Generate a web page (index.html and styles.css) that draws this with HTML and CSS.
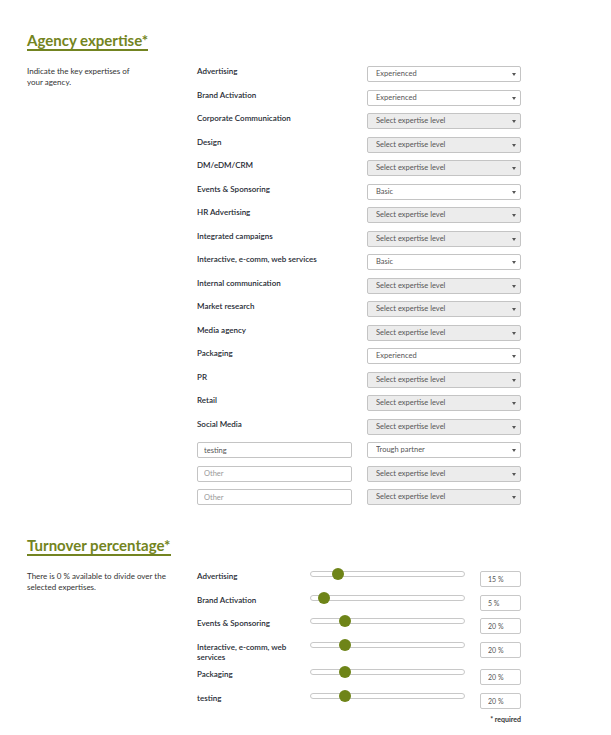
FILE: index.html
```html
<!DOCTYPE html>
<html lang="en">
<head>
<meta charset="utf-8">
<title>Agency expertise</title>
<link rel="stylesheet" href="styles.css">
</head>
<body>
<div class="page">
  <section class="block">
    <h2 class="heading">Agency expertise*</h2>
    <div class="block-body">
      <p class="intro intro-narrow">Indicate the key expertises of your agency.</p>
      <div class="rows">
        <div class="row"><span class="label">Advertising</span><div class="select-wrap"><select class="select"><option>Experienced</option></select></div></div>
        <div class="row"><span class="label">Brand Activation</span><div class="select-wrap"><select class="select"><option>Experienced</option></select></div></div>
        <div class="row"><span class="label">Corporate Communication</span><div class="select-wrap"><select class="select empty"><option>Select expertise level</option></select></div></div>
        <div class="row"><span class="label">Design</span><div class="select-wrap"><select class="select empty"><option>Select expertise level</option></select></div></div>
        <div class="row"><span class="label">DM/eDM/CRM</span><div class="select-wrap"><select class="select empty"><option>Select expertise level</option></select></div></div>
        <div class="row"><span class="label">Events &amp; Sponsoring</span><div class="select-wrap"><select class="select"><option>Basic</option></select></div></div>
        <div class="row"><span class="label">HR Advertising</span><div class="select-wrap"><select class="select empty"><option>Select expertise level</option></select></div></div>
        <div class="row"><span class="label">Integrated campaigns</span><div class="select-wrap"><select class="select empty"><option>Select expertise level</option></select></div></div>
        <div class="row"><span class="label">Interactive, e-comm, web services</span><div class="select-wrap"><select class="select"><option>Basic</option></select></div></div>
        <div class="row"><span class="label">Internal communication</span><div class="select-wrap"><select class="select empty"><option>Select expertise level</option></select></div></div>
        <div class="row"><span class="label">Market research</span><div class="select-wrap"><select class="select empty"><option>Select expertise level</option></select></div></div>
        <div class="row"><span class="label">Media agency</span><div class="select-wrap"><select class="select empty"><option>Select expertise level</option></select></div></div>
        <div class="row"><span class="label">Packaging</span><div class="select-wrap"><select class="select"><option>Experienced</option></select></div></div>
        <div class="row"><span class="label">PR</span><div class="select-wrap"><select class="select empty"><option>Select expertise level</option></select></div></div>
        <div class="row"><span class="label">Retail</span><div class="select-wrap"><select class="select empty"><option>Select expertise level</option></select></div></div>
        <div class="row"><span class="label">Social Media</span><div class="select-wrap"><select class="select empty"><option>Select expertise level</option></select></div></div>
        <div class="row"><input class="text-input" type="text" value="testing"><div class="select-wrap"><select class="select"><option>Trough partner</option></select></div></div>
        <div class="row"><input class="text-input" type="text" placeholder="Other"><div class="select-wrap"><select class="select empty"><option>Select expertise level</option></select></div></div>
        <div class="row"><input class="text-input" type="text" placeholder="Other"><div class="select-wrap"><select class="select empty"><option>Select expertise level</option></select></div></div>
      </div>
    </div>
  </section>

  <section class="block block-turnover">
    <h2 class="heading">Turnover percentage*</h2>
    <div class="block-body">
      <p class="intro intro-wide">There is 0 % available to divide over the selected expertises.</p>
      <div class="sliders">
        <div class="srow"><span class="label">Advertising</span><input class="range" type="range" min="0" max="100" value="15"><input class="pct" type="text" value="15 %"></div>
        <div class="srow"><span class="label">Brand Activation</span><input class="range" type="range" min="0" max="100" value="5"><input class="pct" type="text" value="5 %"></div>
        <div class="srow"><span class="label">Events &amp; Sponsoring</span><input class="range" type="range" min="0" max="100" value="20"><input class="pct" type="text" value="20 %"></div>
        <div class="srow"><span class="label">Interactive, e-comm, web services</span><input class="range" type="range" min="0" max="100" value="20"><input class="pct" type="text" value="20 %"></div>
        <div class="srow"><span class="label">Packaging</span><input class="range" type="range" min="0" max="100" value="20"><input class="pct" type="text" value="20 %"></div>
        <div class="srow"><span class="label">testing</span><input class="range" type="range" min="0" max="100" value="20"><input class="pct" type="text" value="20 %"></div>
        <p class="required">* required</p>
      </div>
    </div>
  </section>
</div>
</body>
</html>
```
FILE: styles.css
```css
* { box-sizing: border-box; }

html, body {
  margin: 0;
  padding: 0;
  background: #ffffff;
}

body {
  font-family: Lato, "Open Sans", "Liberation Sans", sans-serif;
  color: #333333;
  font-size: 8px;
}

.page {
  padding: 31px 0 0 27px;
  width: 611px;
}

.block-turnover {
  margin-top: 31px;
}

.heading {
  display: inline-block;
  margin: 0;
  font-size: 15px;
  line-height: 18px;
  font-weight: 700;
  color: #738421;
  border-bottom: 2px solid #738421;
  padding-bottom: 0;
}

.block-body {
  display: flex;
  margin-top: 15px;
}

.intro {
  margin: 0;
  font-size: 8px;
  line-height: 11px;
  color: #333;
  flex: 0 0 170px;
  padding-right: 20px;
}

.intro-narrow { padding-right: 58px; }
.intro-wide { padding-right: 20px; }

.rows {
  display: flex;
  flex-direction: column;
  gap: 7.5px;
}

.row {
  display: grid;
  grid-template-columns: 155px 154px;
  column-gap: 15px;
  align-items: start;
  height: 16px;
}

.label {
  font-weight: 600;
  font-size: 8px;
  line-height: 10px;
  color: #262a33;
  white-space: nowrap;
}

.select-wrap {
  position: relative;
  width: 154px;
  height: 16px;
}

.select-wrap::after {
  content: "";
  position: absolute;
  right: 5px;
  top: 7px;
  border-left: 2px solid transparent;
  border-right: 2px solid transparent;
  border-top: 3px solid #555;
  pointer-events: none;
}

.select {
  -webkit-appearance: none;
  appearance: none;
  display: block;
  width: 154px;
  height: 16px;
  margin: 0;
  padding: 0 0 0 8px;
  border: 1px solid #c4c4c4;
  border-radius: 2px;
  background: #ffffff;
  font-family: inherit;
  font-size: 7.5px;
  color: #555;
  line-height: 14px;
  outline: none;
}

.select.empty {
  background: #ececec;
}

.text-input {
  display: block;
  width: 155px;
  height: 16px;
  margin: 0;
  padding: 0 0 0 6px;
  border: 1px solid #c4c4c4;
  border-radius: 2px;
  background: #fff;
  font-family: inherit;
  font-size: 7.5px;
  color: #555;
  outline: none;
}

.text-input::placeholder {
  color: #999;
}

.sliders {
  display: flex;
  flex-direction: column;
  gap: 7.5px;
  width: 324px;
}

.srow {
  display: grid;
  grid-template-columns: 113px 155px 41px;
  column-gap: 0;
  align-items: start;
  min-height: 16px;
}

.srow .label {
  white-space: normal;
}

.range {
  -webkit-appearance: none;
  appearance: none;
  width: 155px;
  height: 6px;
  margin: 0;
  padding: 0;
  background: #fff;
  border: 1px solid #c8c8c8;
  border-radius: 3px;
  outline: none;
}

.range::-webkit-slider-runnable-track {
  height: 4px;
  background: transparent;
  border: none;
}

.range::-webkit-slider-thumb {
  -webkit-appearance: none;
  appearance: none;
  width: 12px;
  height: 12px;
  border-radius: 50%;
  background: #6e8418;
  border: none;
  margin-top: -4px;
}

.pct {
  display: block;
  width: 41px;
  height: 16px;
  margin: 0 0 0 15px;
  padding: 0 0 0 7px;
  border: 1px solid #c8c8c8;
  border-radius: 2px;
  background: #fff;
  font-family: inherit;
  font-size: 7px;
  color: #555;
  outline: none;
}

.required {
  margin: -1px 0 0 0;
  text-align: right;
  font-size: 7px;
  line-height: 9px;
  font-weight: 700;
  color: #333;
}
```
